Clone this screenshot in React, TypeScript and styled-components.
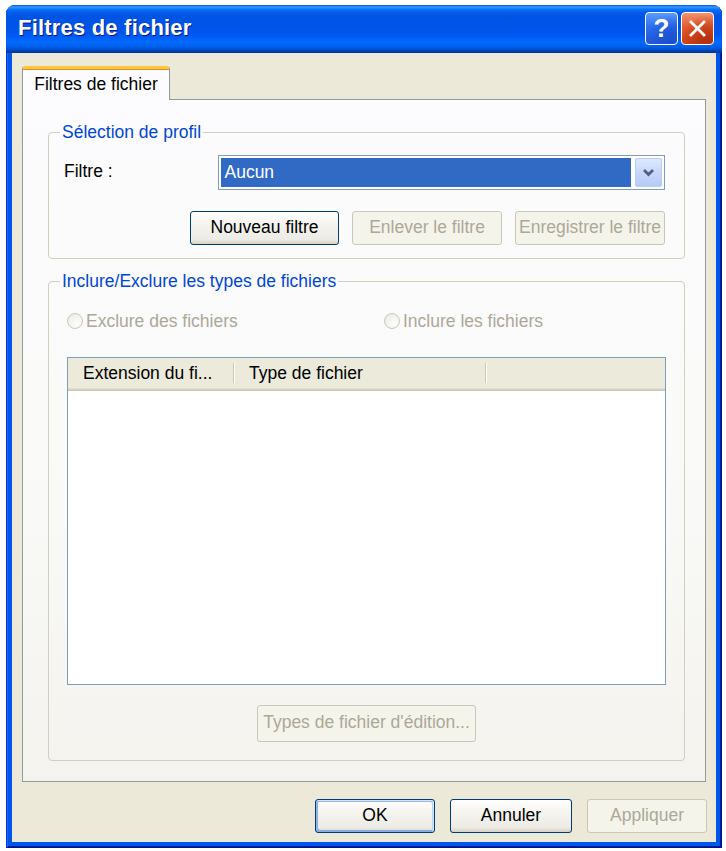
import React from 'react'
import styled, { createGlobalStyle, css } from 'styled-components'

const GlobalStyle = createGlobalStyle`
  html, body {
    margin: 0;
    padding: 0;
    background: #ffffff;
  }
  body {
    font-family: 'Liberation Sans', Arial, sans-serif;
    font-size: 17.5px;
    color: #000;
  }
`

const Window = styled.div`
  margin: 5px 0 0 6px;
  width: 716px;
  height: 843px;
  box-sizing: border-box;
  display: flex;
  flex-direction: column;
  background: #0055ea;
  border-radius: 9px 9px 0 0;
  box-shadow: inset 1px 0 #0831d9, inset -1px -1px #00138c, inset 2px 0 #166aee, inset -2px -2px #001ea0;
  overflow: hidden;
`

const TitleBar = styled.div`
  height: 48px;
  flex: none;
  display: flex;
  align-items: center;
  padding: 0 8px 0 12px;
  background: linear-gradient(
    180deg,
    #0058ee 0%,
    #3593ff 4%,
    #288eff 6%,
    #127dff 8%,
    #036ffc 10%,
    #0262ee 14%,
    #0057e5 20%,
    #0054e3 24%,
    #0055eb 56%,
    #005bf5 66%,
    #026afe 76%,
    #0062ef 86%,
    #0052d6 92%,
    #0040ab 96%,
    #003092 100%
  );
`

const Title = styled.div`
  flex: 1;
  color: #fff;
  font-weight: bold;
  font-size: 22px;
  letter-spacing: 0.2px;
  text-shadow: 1px 1px #0a1883;
  padding-bottom: 2px;
`

const Controls = styled.div`
  display: flex;
  gap: 3px;
  padding-bottom: 2px;
`

const CaptionButton = styled.div<{ $kind: 'help' | 'close' }>`
  width: 33px;
  height: 33px;
  box-sizing: border-box;
  border: 1px solid #fff;
  border-radius: 4px;
  display: flex;
  align-items: center;
  justify-content: center;
  color: #fff;
  font-weight: bold;
  font-size: 26px;
  ${p =>
    p.$kind === 'help'
      ? css`
          background: radial-gradient(circle at 80% 90%, #1a4fd0 0%, transparent 70%),
            linear-gradient(180deg, #5b9bff 0%, #2e6fee 45%, #2159d9 100%);
        `
      : css`
          background: radial-gradient(circle at 80% 90%, #b2300c 0%, transparent 70%),
            linear-gradient(180deg, #f2936f 0%, #e45a30 45%, #d14315 100%);
        `}
`

const Client = styled.div`
  flex: 1;
  margin: 0 6px 6px 6px;
  background: #ece9d8;
  display: flex;
  flex-direction: column;
  padding: 13px 10px 0 10px;
`

const TabStrip = styled.div`
  display: flex;
  height: 33px;
  position: relative;
  z-index: 1;
`

const Tab = styled.div`
  width: 148px;
  height: 34px;
  box-sizing: border-box;
  border: 1px solid #919b9c;
  border-top: 3px solid #ffc83c;
  border-bottom: none;
  border-radius: 3px 3px 0 0;
  background: #fcfcfe;
  display: flex;
  align-items: center;
  justify-content: center;
  padding-bottom: 1px;
  box-shadow: inset 0 1px #e68b2c;
`

const Panel = styled.div`
  width: 684px;
  height: 683px;
  box-sizing: border-box;
  border: 1px solid #919b9c;
  background: linear-gradient(180deg, #fcfcfe 0%, #f9f9f7 60%, #f4f3ee 100%);
  padding: 22px 20px 0 25px;
`

const Group = styled.fieldset<{ $gap?: number }>`
  margin: ${p => p.$gap || 0}px 0 0 0;
  padding: 0;
  border: 1px solid #d0d0bf;
  border-radius: 4px;
  min-width: 0;
`

const Legend = styled.legend`
  margin-left: 11px;
  padding: 0 2px;
  color: #0046d5;
  line-height: 21px;
`

const GroupBody = styled.div<{ $pad: string }>`
  padding: ${p => p.$pad};
  display: flex;
  flex-direction: column;
`

const FieldRow = styled.div`
  display: flex;
  align-items: center;
`

const FieldLabel = styled.div`
  width: 155px;
  padding-bottom: 2px;
`

const Combo = styled.div`
  width: 448px;
  height: 35px;
  box-sizing: border-box;
  border: 1px solid #7f9db9;
  background: #fff;
  padding: 2px;
  display: flex;
  gap: 4px;
`

const ComboValue = styled.div`
  flex: 1;
  background: #316ac5;
  color: #fff;
  display: flex;
  align-items: center;
  padding: 0 0 1px 3px;
`

const ComboArrow = styled.div`
  width: 27px;
  box-sizing: border-box;
  border: 1px solid #b9cdf5;
  border-radius: 2px;
  background: linear-gradient(180deg, #dde8fe 0%, #c6d7fb 50%, #b6caf6 100%);
  display: flex;
  align-items: center;
  justify-content: center;
`

const ButtonRow = styled.div<{ $top: number; $align: string }>`
  display: flex;
  justify-content: ${p => p.$align};
  gap: 13px;
  margin-top: ${p => p.$top}px;
`

const Button = styled.button<{ $w: number; $h?: number; $default?: boolean }>`
  width: ${p => p.$w}px;
  height: ${p => p.$h || 34}px;
  box-sizing: border-box;
  font-family: inherit;
  font-size: 17.5px;
  border: 1px solid #003c74;
  border-radius: 3px;
  color: #000;
  padding: 0 0 2px 0;
  background: linear-gradient(180deg, #ffffff 0%, #f4f3ee 40%, #ecebe5 86%, #d8d0c4 100%);
  ${p =>
    p.$default &&
    css`
      box-shadow: inset -1px 1px #cee7ff, inset 1px 2px #98b8ea, inset -2px 2px #bcd4f6,
        inset 1px -1px #89ade4, inset 2px -2px #89ade4;
    `}
  &:disabled {
    border-color: #c9c7ba;
    background: #f5f4ea;
    color: #aca899;
    box-shadow: none;
  }
`

const RadioRow = styled.div`
  display: flex;
  height: 24px;
  align-items: center;
`

const Radio = styled.label<{ $w: number }>`
  width: ${p => p.$w}px;
  display: flex;
  align-items: center;
  gap: 3px;
  color: #aca899;
`

const RadioDot = styled.span`
  width: 16px;
  height: 16px;
  box-sizing: border-box;
  border-radius: 50%;
  border: 1px solid #cac8bb;
  background: radial-gradient(circle at 65% 70%, #fdfdfb 0%, #f2f1ec 60%, #e6e4da 100%);
`

const List = styled.div`
  margin-top: 24px;
  height: 328px;
  box-sizing: border-box;
  border: 1px solid #7f9db9;
  background: #fff;
  display: flex;
  flex-direction: column;
`

const ListHeader = styled.div`
  height: 33px;
  flex: none;
  display: flex;
  background: #ebeadb;
  box-shadow: inset 0 -1px #cbc7b8, inset 0 -2px #d6d2c2, inset 0 -3px #e2decd;
`

const HeaderCell = styled.div<{ $w?: number }>`
  ${p => (p.$w ? `width: ${p.$w}px;` : 'flex: 1;')}
  box-sizing: border-box;
  display: flex;
  align-items: center;
  padding: 0 0 3px 15px;
  position: relative;
  ${p =>
    p.$w &&
    css`
      &::after {
        content: '';
        position: absolute;
        right: 0;
        top: 5px;
        bottom: 8px;
        width: 1px;
        background: #cbc7b8;
        box-shadow: 1px 0 #fff;
      }
    `}
`

const Footer = styled.div`
  display: flex;
  justify-content: flex-end;
  gap: 15px;
  margin: 17px -1px 0 0;
`

function Chevron() {
  return (
    <svg width="13" height="9" viewBox="0 0 13 9">
      <polyline points="2,2 6.5,6.5 11,2" fill="none" stroke="#4d6185" strokeWidth="2.8" />
    </svg>
  )
}

function CloseGlyph() {
  return (
    <svg width="19" height="19" viewBox="0 0 19 19">
      <path d="M3 3 L16 16 M16 3 L3 16" stroke="#fff" strokeWidth="2.8" strokeLinecap="square" />
    </svg>
  )
}

export default function App() {
  return (
    <>
      <GlobalStyle />
      <Window>
        <TitleBar>
          <Title>Filtres de fichier</Title>
          <Controls>
            <CaptionButton $kind="help">?</CaptionButton>
            <CaptionButton $kind="close">
              <CloseGlyph />
            </CaptionButton>
          </Controls>
        </TitleBar>
        <Client>
          <TabStrip>
            <Tab>Filtres de fichier</Tab>
          </TabStrip>
          <Panel>
            <Group>
              <Legend>Sélection de profil</Legend>
              <GroupBody $pad="12px 19px 13px 15px">
                <FieldRow>
                  <FieldLabel>Filtre :</FieldLabel>
                  <Combo>
                    <ComboValue>Aucun</ComboValue>
                    <ComboArrow>
                      <Chevron />
                    </ComboArrow>
                  </Combo>
                </FieldRow>
                <ButtonRow $top={21} $align="flex-end">
                  <Button $w={149}>Nouveau filtre</Button>
                  <Button $w={150} disabled>
                    Enlever le filtre
                  </Button>
                  <Button $w={150} disabled>
                    Enregistrer le filtre
                  </Button>
                </ButtonRow>
              </GroupBody>
            </Group>
            <Group $gap={12}>
              <Legend>Inclure/Exclure les types de fichiers</Legend>
              <GroupBody $pad="17px 18px 18px 18px">
                <RadioRow>
                  <Radio $w={317}>
                    <RadioDot />
                    Exclure des fichiers
                  </Radio>
                  <Radio $w={200}>
                    <RadioDot />
                    Inclure les fichiers
                  </Radio>
                </RadioRow>
                <List>
                  <ListHeader>
                    <HeaderCell $w={166}>Extension du fi...</HeaderCell>
                    <HeaderCell $w={252}>Type de fichier</HeaderCell>
                    <HeaderCell />
                  </ListHeader>
                </List>
                <ButtonRow $top={20} $align="center">
                  <Button $w={219} $h={37} disabled>
                    Types de fichier d'édition...
                  </Button>
                </ButtonRow>
              </GroupBody>
            </Group>
          </Panel>
          <Footer>
            <Button $w={120} $default>
              OK
            </Button>
            <Button $w={122}>Annuler</Button>
            <Button $w={120} disabled>
              Appliquer
            </Button>
          </Footer>
        </Client>
      </Window>
    </>
  )
}
